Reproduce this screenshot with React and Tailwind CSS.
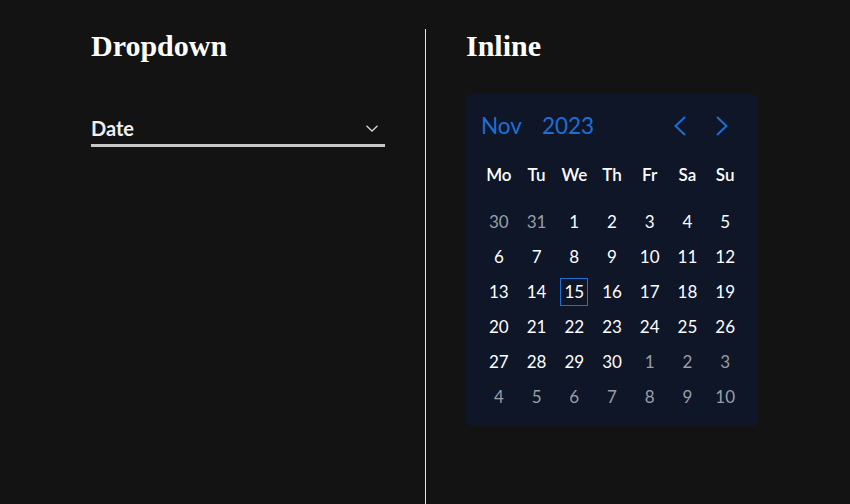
import React from 'react';

const weekdays = ['Mo', 'Tu', 'We', 'Th', 'Fr', 'Sa', 'Su'];

// 6 weeks shown, Nov 2023 starts on a Wednesday
const buildDays = () => {
  const days = [30, 31].map((d) => ({ day: d, muted: true }));
  for (let d = 1; d <= 30; d++) days.push({ day: d, muted: false });
  let next = 1;
  while (days.length < 42) days.push({ day: next++, muted: true });
  return days;
};

const ChevronDown = () => (
  <svg width="12" height="7" viewBox="0 0 12 7" fill="none">
    <polyline points="0.5,0.8 6,6 11.5,0.8" stroke="#d4d4d4" strokeWidth="1.3" />
  </svg>
);

const ChevronLeft = () => (
  <svg width="12" height="20" viewBox="0 0 12 20" fill="none">
    <polyline points="11,1 1.5,10 11,19" stroke="#1d6fd6" strokeWidth="2" />
  </svg>
);

const ChevronRight = () => (
  <svg width="12" height="20" viewBox="0 0 12 20" fill="none">
    <polyline points="1,1 10.5,10 1,19" stroke="#1d6fd6" strokeWidth="2" />
  </svg>
);

const Calendar = () => {
  const days = buildDays();
  const weeks = [];
  for (let i = 0; i < days.length; i += 7) weeks.push(days.slice(i, i + 7));

  return (
    <div className="w-[292px] h-[332px] bg-[#0e1628] rounded-[5px] pt-[15px] px-[14px] font-['Lato',sans-serif]">
      {/* Header */}
      <div className="h-[34px] flex items-center justify-between">
        <div className="flex items-center gap-[20px] pl-[1px] text-[22.5px] text-[#1d6fd6]">
          <span>Nov</span>
          <span>2023</span>
        </div>
        <div className="flex items-center gap-[14px] pr-[8px]">
          <button className="w-[28px] h-[28px] flex items-center justify-center">
            <ChevronLeft />
          </button>
          <button className="w-[28px] h-[28px] flex items-center justify-center">
            <ChevronRight />
          </button>
        </div>
      </div>

      {/* Weekdays */}
      <div className="mt-[15px] grid grid-cols-7 h-[34px] items-center">
        {weekdays.map((w) => (
          <div key={w} className="text-center text-[17px] font-semibold text-white">
            {w}
          </div>
        ))}
      </div>

      {/* Days */}
      <div className="mt-[12px]">
        {weeks.map((week, i) => (
          <div key={i} className="grid grid-cols-7 h-[35px] items-center">
            {week.map((d, j) => (
              <div key={j} className="flex justify-center">
                <span
                  className={
                    !d.muted && d.day === 15
                      ? 'w-[28px] h-[28px] flex items-center justify-center border border-[#1d6fd6] text-[17px] text-white'
                      : d.muted
                      ? 'text-[17px] text-[#9a9ea6]'
                      : 'text-[17px] text-white'
                  }
                >
                  {d.day}
                </span>
              </div>
            ))}
          </div>
        ))}
      </div>
    </div>
  );
};

export default function App() {
  return (
    <div className="h-screen w-full bg-[#131313] pt-[29px] flex">
      {/* Dropdown column */}
      <div className="w-[425px] pl-[91px] pr-[40px]">
        <h2 className="font-['Liberation_Serif',serif] font-bold text-[30px] leading-[34px] text-white">
          Dropdown
        </h2>
        <div className="mt-[53px] flex items-center justify-between pb-[4px] border-b-[3px] border-[#c8c8c8] font-['Lato',sans-serif]">
          <span className="text-[20px] leading-[24px] font-bold text-[#f0f0f0]">Date</span>
          <span className="mr-[7px] flex items-center">
            <ChevronDown />
          </span>
        </div>
      </div>

      {/* Inline column */}
      <div className="flex-1 border-l border-[#e5e5e5] pl-[40px]">
        <h2 className="font-['Liberation_Serif',serif] font-bold text-[30px] leading-[34px] text-white">
          Inline
        </h2>
        <div className="mt-[31px]">
          <Calendar />
        </div>
      </div>
    </div>
  );
}
